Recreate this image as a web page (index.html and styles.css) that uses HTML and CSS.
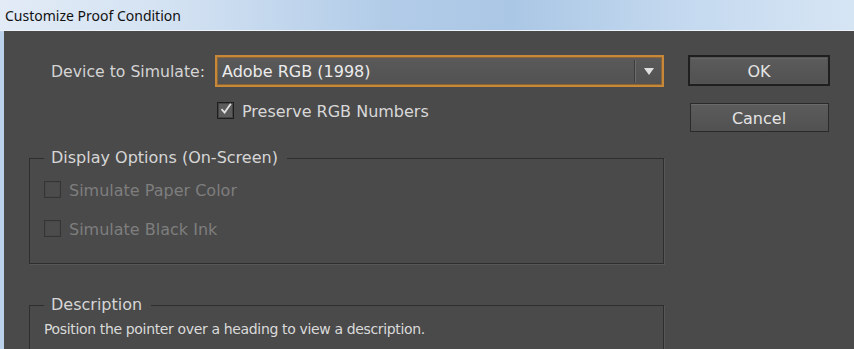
FILE: index.html
```html
<!DOCTYPE html>
<html lang="en">
<head>
    <meta charset="UTF-8">
    <meta name="viewport" content="width=device-width, initial-scale=1.0">
    <title>Customize Proof Condition</title>
    <link rel="stylesheet" href="styles.css">
</head>
<body>
    <div class="titlebar">Customize Proof Condition</div>

    <div class="frame">
        <div class="panel">
            <div class="main">
                <div class="device-row">
                    <label class="device-label">Device to Simulate:</label>
                    <div class="dropdown">
                        <span class="dropdown-value">Adobe RGB (1998)</span>
                        <span class="dropdown-sep"></span>
                        <span class="dropdown-arrow"></span>
                    </div>
                </div>

                <div class="check-row preserve">
                    <span class="checkbox checked">
                        <svg width="14" height="14" viewBox="0 0 14 14"><path d="M2.5 7.2 L5.6 10.6 L11.8 1.8" fill="none" stroke="#e2e2e2" stroke-width="1.8"/></svg>
                    </span>
                    <span class="check-text">Preserve RGB Numbers</span>
                </div>

                <fieldset class="group display-group">
                    <legend>Display Options (On-Screen)</legend>
                    <div class="check-row disabled">
                        <span class="checkbox"></span>
                        <span class="check-text">Simulate Paper Color</span>
                    </div>
                    <div class="check-row disabled second">
                        <span class="checkbox"></span>
                        <span class="check-text">Simulate Black Ink</span>
                    </div>
                </fieldset>

                <fieldset class="group description-group">
                    <legend>Description</legend>
                    <p class="description">Position the pointer over a heading to view a description.</p>
                </fieldset>
            </div>

            <div class="buttons">
                <button class="btn btn-default">OK</button>
                <button class="btn">Cancel</button>
            </div>
        </div>
    </div>
</body>
</html>
```

FILE: styles.css
```css
html, body {
    margin: 0;
    height: 100%;
    overflow: hidden;
}
body {
    font-family: "DejaVu Sans", Verdana, sans-serif;
    background: #c9dbef;
}
.titlebar {
    height: 31px;
    box-sizing: border-box;
    padding: 6px 0 0 5px;
    font-family: "Noto Sans", "Open Sans", sans-serif;
    font-size: 14px;
    line-height: 20px;
    color: #111;
    background: linear-gradient(90deg, #e2ebf6 0%, #d3e2f2 20%, #b2cce8 45%, #aac7e5 60%, #c4d9ef 80%, #d6e5f4 100%);
    border-bottom: 1px solid #eef3f9;
}
.frame {
    display: flex;
    padding: 0 2px 0 4px;
    height: 100%;
    background: linear-gradient(90deg, #bcd2ea 0px, #bcd2ea 4px, #4a4a4a 4px);
}
.panel {
    flex: 1;
    display: flex;
    background: #4a4a4a;
    padding: 24px 0 0 25px;
    color: #d4d4d4;
    font-size: 16px;
}
.main {
    width: 635px;
}

/* device row */
.device-row {
    display: flex;
    align-items: center;
    height: 32px;
}
.device-label {
    width: 176px;
    text-align: right;
    margin-right: 10px;
    font-size: 15.7px;
    padding-top: 1px;
}
.dropdown {
    display: flex;
    align-items: center;
    width: 449px;
    height: 32px;
    box-sizing: border-box;
    border: 2px solid #c8883a;
    box-shadow: inset 0 0 0 1px #8d6434;
    background: linear-gradient(#5a5a5a, #525252);
    color: #ececec;
}
.dropdown-value {
    flex: 1;
    padding: 1px 0 0 5px;
}
.dropdown-sep {
    width: 1px;
    height: 22px;
    background: #3c3c3c;
    border-right: 1px solid #6c6c6c;
}
.dropdown-arrow {
    width: 0;
    height: 0;
    margin: 1px 8px 0 8px;
    border-left: 5px solid transparent;
    border-right: 5px solid transparent;
    border-top: 7px solid #e0e0e0;
}

/* checkboxes */
.check-row {
    display: flex;
    align-items: center;
    height: 17px;
}
.preserve {
    margin: 14px 0 0 188px;
    height: 18px;
}
.checkbox {
    width: 17px;
    height: 17px;
    box-sizing: border-box;
    border: 1px solid #1e1e1e;
    background: #5c5c5c;
    box-shadow: inset 0 0 0 1px #444;
    display: flex;
    align-items: center;
    justify-content: center;
    flex-shrink: 0;
}
.checkbox svg {
    display: block;
    margin-top: -2px;
}
.check-text {
    margin-left: 8px;
    white-space: nowrap;
    padding-top: 2px;
}
.preserve .check-text {
    color: #d8d8d8;
}
.disabled .checkbox {
    border-color: #353535;
    background: #4c4c4c;
    box-shadow: inset 0 0 0 1px #484848;
}
.disabled .check-text {
    color: #7e7e7e;
}
.second {
    margin-top: 22px;
}

/* groups */
.group {
    margin: 0;
    border: 1px solid #2e2e2e;
    box-shadow: 1px 1px 0 #575757;
    padding: 13px 0 26px 14px;
    min-width: 0;
}
.group legend {
    padding: 0 9px 0 7px;
    line-height: 20px;
    color: #d6d6d6;
}
.display-group {
    margin-top: 29px;
}
.description-group {
    margin-top: 31px;
    padding-top: 5px;
    padding-bottom: 40px;
}
.description {
    margin: 0;
    font-size: 14px;
    letter-spacing: -0.35px;
    line-height: 18px;
    color: #dadada;
}

/* buttons */
.buttons {
    display: flex;
    flex-direction: column;
    align-items: center;
    width: 142px;
    margin-left: 24px;
}
.btn {
    width: 139px;
    height: 29px;
    margin: 0;
    padding: 2px 0 0;
    font-family: "DejaVu Sans", Verdana, sans-serif;
    font-size: 16px;
    color: #e4e4e4;
    background: linear-gradient(#5c5c5c, #515151);
    border: 1px solid #2a2a2a;
    box-shadow: inset 0 1px 0 #6a6a6a;
}
.btn-default {
    width: 142px;
    height: 31px;
    margin-bottom: 17px;
    border: 2px solid #1f1f1f;
    box-shadow: inset 0 0 0 1px #555, inset 0 2px 0 #666;
}
```
